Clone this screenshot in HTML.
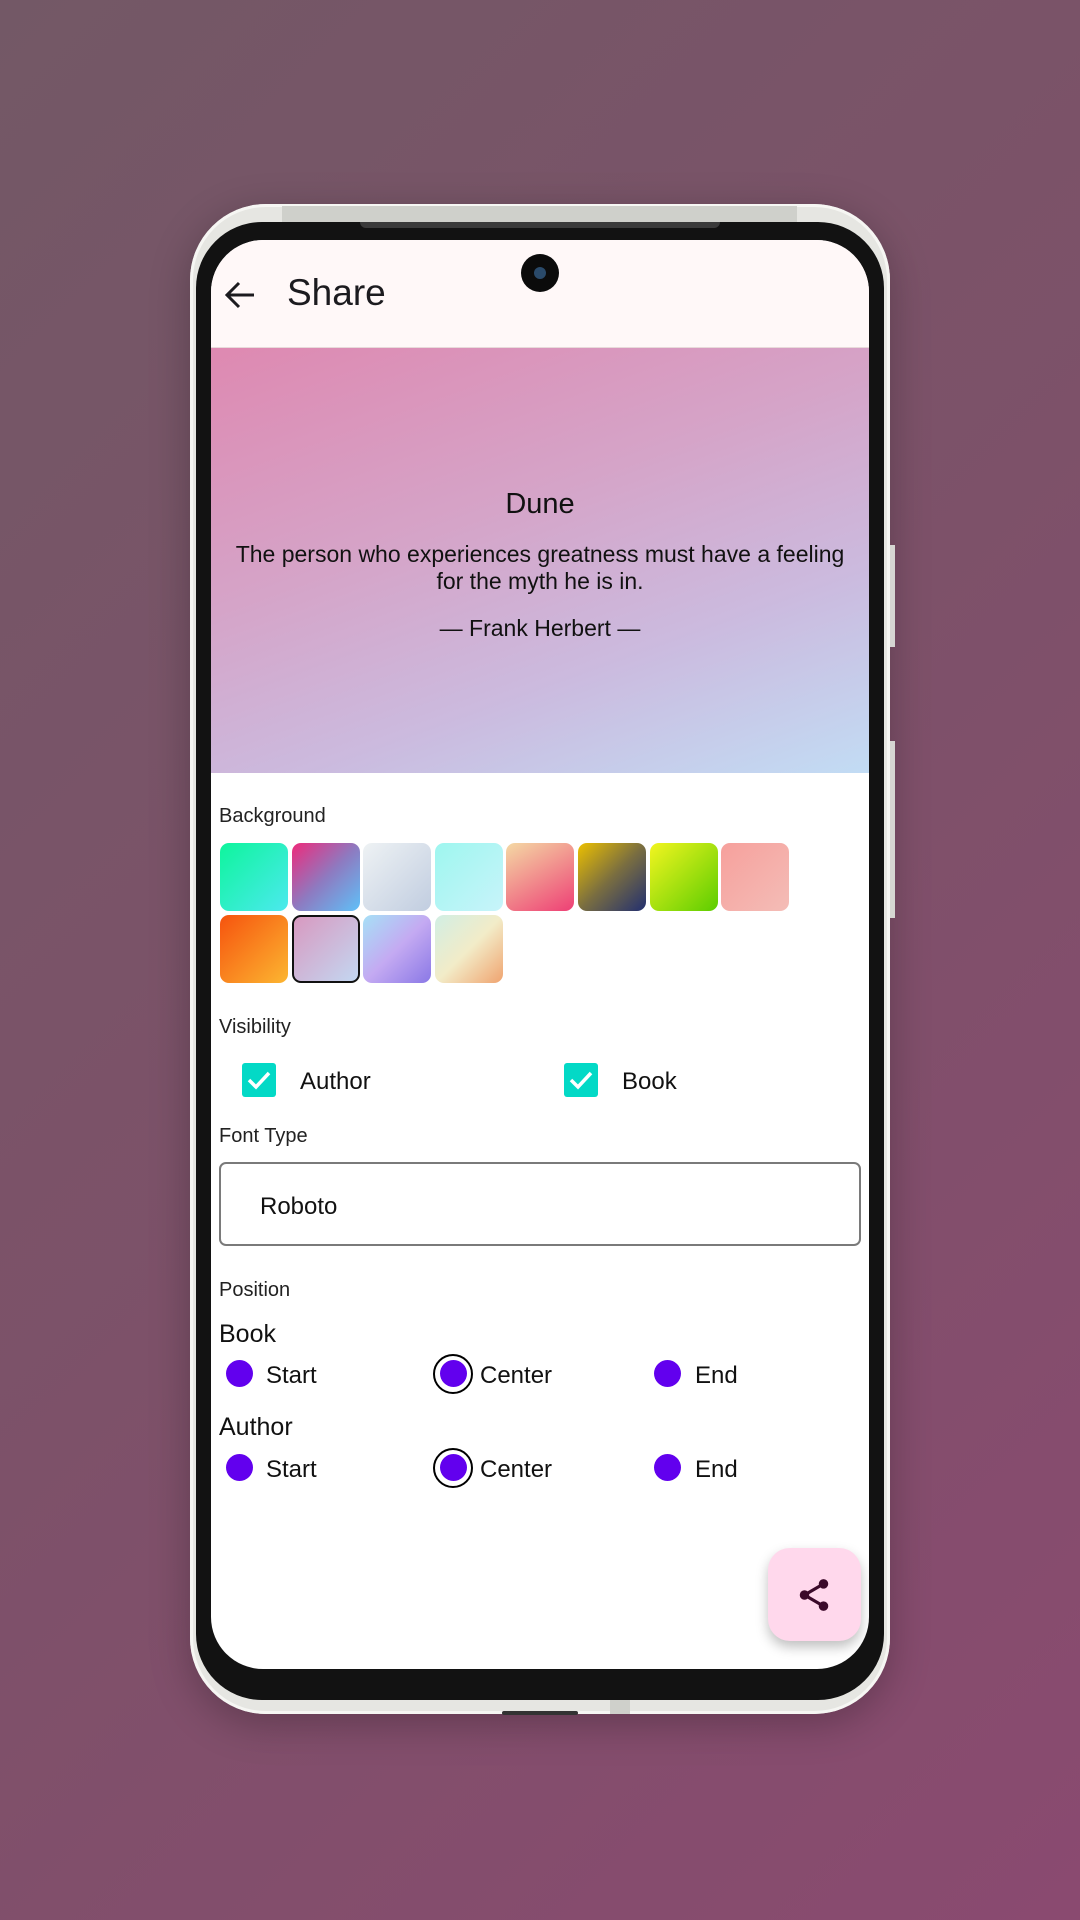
<!DOCTYPE html>
<html><head><meta charset="utf-8"><style>
*{margin:0;padding:0;box-sizing:border-box}
body{width:1080px;height:1920px;overflow:hidden;position:relative;font-family:"Liberation Sans",sans-serif;
background:linear-gradient(135deg,#735866 0%,#7d5169 50%,#8a4a70 100%);}
.abs{position:absolute}
.phone{left:190px;top:204px;width:700px;height:1510px;border-radius:76px;background:#e6e6e2;box-shadow:0 10px 40px rgba(0,0,0,.25), inset 0 0 0 3px #f6f6f3}
.band{left:282px;top:206px;width:515px;height:16px;background:#cfd0cb}
.bezel{left:196px;top:222px;width:688px;height:1478px;border-radius:66px;background:#121212}
.spk{left:360px;top:222px;width:360px;height:6px;background:#3a3a3a;border-radius:0 0 6px 6px}
.screen{left:211px;top:240px;width:658px;height:1429px;border-radius:52px;background:#fff;overflow:hidden}
.bar{left:0;top:0;width:658px;height:108px;background:#fff8f8;border-bottom:1px solid #e8dada}
.prev{left:0;top:108px;width:658px;height:425px;background:linear-gradient(160deg,#de89b1 0%,#d5a4c8 40%,#cbbbdf 70%,#c2dcf4 100%)}
.c{position:absolute;left:0;width:658px;text-align:center;color:#111}
.lbl{position:absolute;left:8px;font-size:20px;color:#222}
.sw{position:absolute;width:68px;height:68px;border-radius:9px}
.cb{position:absolute;width:34px;height:34px;background:#03d9c6;border-radius:3px}
.t24{position:absolute;font-size:24px;color:#111}
.dot{position:absolute;width:27px;height:27px;border-radius:50%;background:#6200ee}
.ring{position:absolute;width:40px;height:40px;border-radius:50%;border:2.5px solid #000}
</style></head><body>
<div class="abs phone"></div>
<div class="abs band"></div>
<div class="abs" style="left:890px;top:545px;width:5px;height:102px;background:#d6d6d2"></div>
<div class="abs" style="left:890px;top:741px;width:5px;height:177px;background:#d6d6d2"></div>
<div class="abs bezel"></div>
<div class="abs spk"></div>
<div class="abs" style="left:502px;top:1711px;width:76px;height:4px;background:#333;border-radius:2px"></div>
<div class="abs" style="left:610px;top:1700px;width:20px;height:14px;background:#cfd0cb"></div>
<div class="abs screen">
  <div class="abs bar">
    <svg class="abs" style="left:13px;top:40px" width="34" height="30" viewBox="0 0 34 30"><path d="M30 15H4M15 3L3 15l12 12" stroke="#1c1b1f" stroke-width="3" fill="none"/></svg>
    <div class="abs" style="left:76px;top:32px;font-size:37px;color:#1c1b1f">Share</div>
  </div>
  <div class="abs" style="left:310px;top:14px;width:38px;height:38px;border-radius:50%;background:#0b0b0b"><div class="abs" style="left:13px;top:13px;width:12px;height:12px;border-radius:50%;background:#2a4a6a"></div></div>
  <div class="abs prev">
    <div class="c" style="top:140px;font-size:29px">Dune</div>
    <div class="c" style="top:193px;font-size:23px;line-height:27px;padding:0 22px">The person who experiences greatness must have a feeling for the myth he is in.</div>
    <div class="c" style="top:267px;font-size:23px">— Frank Herbert —</div>
  </div>
  <div class="lbl" style="top:565px">Background</div>
  <div class="sw" style="left:9px;top:603px;background:linear-gradient(135deg,#0ef59c,#4ce9ee)"></div>
  <div class="sw" style="left:81px;top:603px;background:linear-gradient(135deg,#ee2a7b,#8e7ac0,#5fc0f8)"></div>
  <div class="sw" style="left:152px;top:603px;background:linear-gradient(135deg,#eef2f4,#c1cde0)"></div>
  <div class="sw" style="left:224px;top:603px;background:linear-gradient(135deg,#9ef6ef,#c8f4fa)"></div>
  <div class="sw" style="left:295px;top:603px;background:linear-gradient(150deg,#f4d9a4,#ee3f75)"></div>
  <div class="sw" style="left:367px;top:603px;background:linear-gradient(135deg,#ecc000,#7a6e40,#222f70)"></div>
  <div class="sw" style="left:439px;top:603px;background:linear-gradient(135deg,#f2f520,#5ccd00)"></div>
  <div class="sw" style="left:510px;top:603px;background:linear-gradient(135deg,#f6a09c,#f4bdb7)"></div>
  <div class="sw" style="left:9px;top:675px;background:linear-gradient(135deg,#f6530e,#fcb631)"></div>
  <div class="sw" style="left:81px;top:675px;background:linear-gradient(135deg,#d899c0,#c3d7f1);border:2px solid #111"></div>
  <div class="sw" style="left:152px;top:675px;background:linear-gradient(135deg,#a6e0f6,#c4aaf2,#8a78e6)"></div>
  <div class="sw" style="left:224px;top:675px;background:linear-gradient(135deg,#d1eee4,#f2ecc8,#f0a36f)"></div>
  <div class="lbl" style="top:776px">Visibility</div>
  <div class="cb" style="left:31px;top:823px"><svg width="34" height="34"><path d="M7 17l7 7 13-14" stroke="#fff" stroke-width="3.5" fill="none"/></svg></div>
  <div class="t24" style="left:89px;top:828px">Author</div>
  <div class="cb" style="left:353px;top:823px"><svg width="34" height="34"><path d="M7 17l7 7 13-14" stroke="#fff" stroke-width="3.5" fill="none"/></svg></div>
  <div class="t24" style="left:411px;top:828px">Book</div>
  <div class="lbl" style="top:885px">Font Type</div>
  <div class="abs" style="left:8px;top:922px;width:642px;height:84px;border:2px solid #7a7a7a;border-radius:7px"></div>
  <div class="t24" style="left:49px;top:953px">Roboto</div>
  <div class="lbl" style="top:1039px">Position</div>
  <div class="t24" style="left:8px;top:1080px;font-size:25px">Book</div>
  <div class="dot" style="left:15px;top:1120px"></div><div class="t24" style="left:55px;top:1122px">Start</div>
  <div class="ring" style="left:222px;top:1114px"></div><div class="dot" style="left:229px;top:1120px"></div><div class="t24" style="left:269px;top:1122px">Center</div>
  <div class="dot" style="left:443px;top:1120px"></div><div class="t24" style="left:484px;top:1122px">End</div>
  <div class="t24" style="left:8px;top:1173px;font-size:25px">Author</div>
  <div class="dot" style="left:15px;top:1214px"></div><div class="t24" style="left:55px;top:1216px">Start</div>
  <div class="ring" style="left:222px;top:1208px"></div><div class="dot" style="left:229px;top:1214px"></div><div class="t24" style="left:269px;top:1216px">Center</div>
  <div class="dot" style="left:443px;top:1214px"></div><div class="t24" style="left:484px;top:1216px">End</div>
  <div class="abs" style="left:557px;top:1308px;width:93px;height:93px;border-radius:22px;background:#ffd8ec;box-shadow:0 6px 12px rgba(0,0,0,.25)">
    <svg class="abs" style="left:27px;top:28px" width="38" height="38" viewBox="0 0 24 24"><circle cx="18" cy="5" r="3" fill="#3b0a2a"/><circle cx="6" cy="12" r="3" fill="#3b0a2a"/><circle cx="18" cy="19" r="3" fill="#3b0a2a"/><path d="M18 5L6 12l12 7" stroke="#3b0a2a" stroke-width="2" fill="none"/></svg>
  </div>
</div>
</body></html>
